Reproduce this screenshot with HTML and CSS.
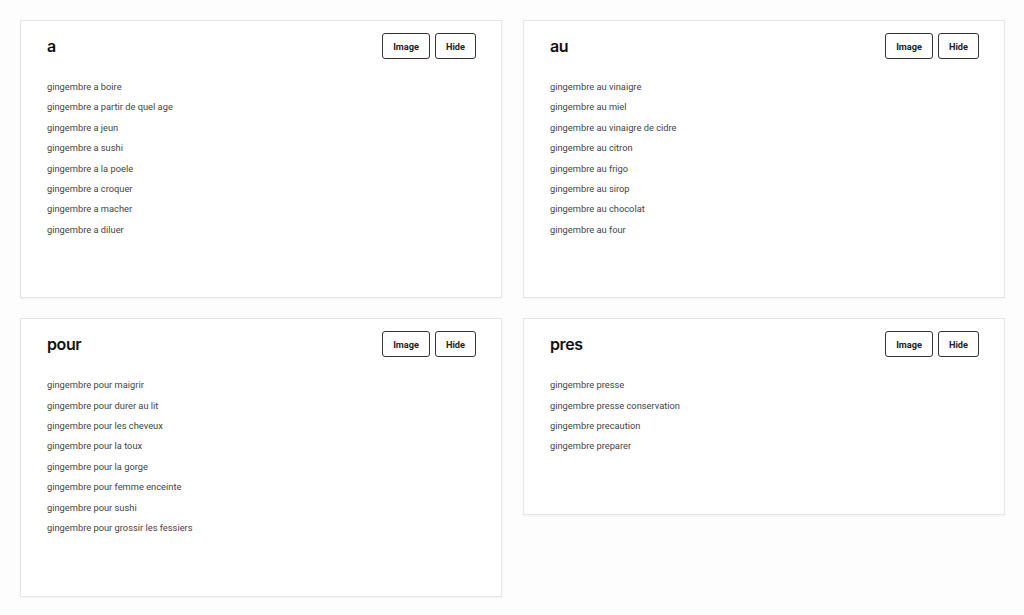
FILE: index.html
```
<!DOCTYPE html>
<html lang="fr">
  <head>
    <meta charset="UTF-8" />
    <meta name="viewport" content="width=device-width, initial-scale=1.0" />
    <title>Suggestions gingembre</title>
    <link rel="stylesheet" href="styles.css">
  </head>
  <body>
    <div class="grid">
      <div class="card">
        <div class="card-head">
          <h2>a</h2>
          <div class="actions">
            <button>Image</button>
            <button>Hide</button>
          </div>
        </div>
        <ul>
          <li>gingembre a boire</li>
          <li>gingembre a partir de quel age</li>
          <li>gingembre a jeun</li>
          <li>gingembre a sushi</li>
          <li>gingembre a la poele</li>
          <li>gingembre a croquer</li>
          <li>gingembre a macher</li>
          <li>gingembre a diluer</li>
        </ul>
      </div>

      <div class="card">
        <div class="card-head">
          <h2>au</h2>
          <div class="actions">
            <button>Image</button>
            <button>Hide</button>
          </div>
        </div>
        <ul>
          <li>gingembre au vinaigre</li>
          <li>gingembre au miel</li>
          <li>gingembre au vinaigre de cidre</li>
          <li>gingembre au citron</li>
          <li>gingembre au frigo</li>
          <li>gingembre au sirop</li>
          <li>gingembre au chocolat</li>
          <li>gingembre au four</li>
        </ul>
      </div>

      <div class="card">
        <div class="card-head">
          <h2>pour</h2>
          <div class="actions">
            <button>Image</button>
            <button>Hide</button>
          </div>
        </div>
        <ul>
          <li>gingembre pour maigrir</li>
          <li>gingembre pour durer au lit</li>
          <li>gingembre pour les cheveux</li>
          <li>gingembre pour la toux</li>
          <li>gingembre pour la gorge</li>
          <li>gingembre pour femme enceinte</li>
          <li>gingembre pour sushi</li>
          <li>gingembre pour grossir les fessiers</li>
        </ul>
      </div>

      <div class="card">
        <div class="card-head">
          <h2>pres</h2>
          <div class="actions">
            <button>Image</button>
            <button>Hide</button>
          </div>
        </div>
        <ul>
          <li>gingembre presse</li>
          <li>gingembre presse conservation</li>
          <li>gingembre precaution</li>
          <li>gingembre preparer</li>
        </ul>
      </div>
    </div>
  </body>
</html>
```

FILE: styles.css
```
body {
  margin: 0;
  background-color: #fdfdfd;
  font-family: Roboto, "Liberation Sans", sans-serif;
  color: #333;
}

.grid {
  display: grid;
  grid-template-columns: 1fr 1fr;
  gap: 20px 21px;
  align-items: start;
  padding: 20px 19px 20px 20px;
}

.card {
  background-color: #fff;
  border: 1px solid #e6e6e6;
  box-shadow: 0 1px 2px rgba(0, 0, 0, 0.05);
  padding: 12px 25px 57px 26px;
}

.card-head {
  display: flex;
  justify-content: space-between;
  align-items: center;
  height: 26px;
}

h2 {
  margin: 0;
  font-family: Inter, "Noto Sans", sans-serif;
  font-size: 16px;
  font-weight: 600;
  color: #111;
  letter-spacing: -0.4px;
}

.actions {
  display: flex;
  gap: 5px;
}

button {
  height: 26px;
  padding: 0 10px;
  border: 1px solid #333;
  border-radius: 3px;
  background-color: #fff;
  font-family: Roboto, sans-serif;
  font-size: 9.2px;
  font-weight: 700;
  color: #222;
  cursor: pointer;
}

ul {
  list-style: none;
  margin: 18px 0 0;
  padding: 0;
}

li {
  font-size: 9.3px;
  line-height: 20.4px;
  color: #444;
}
```
